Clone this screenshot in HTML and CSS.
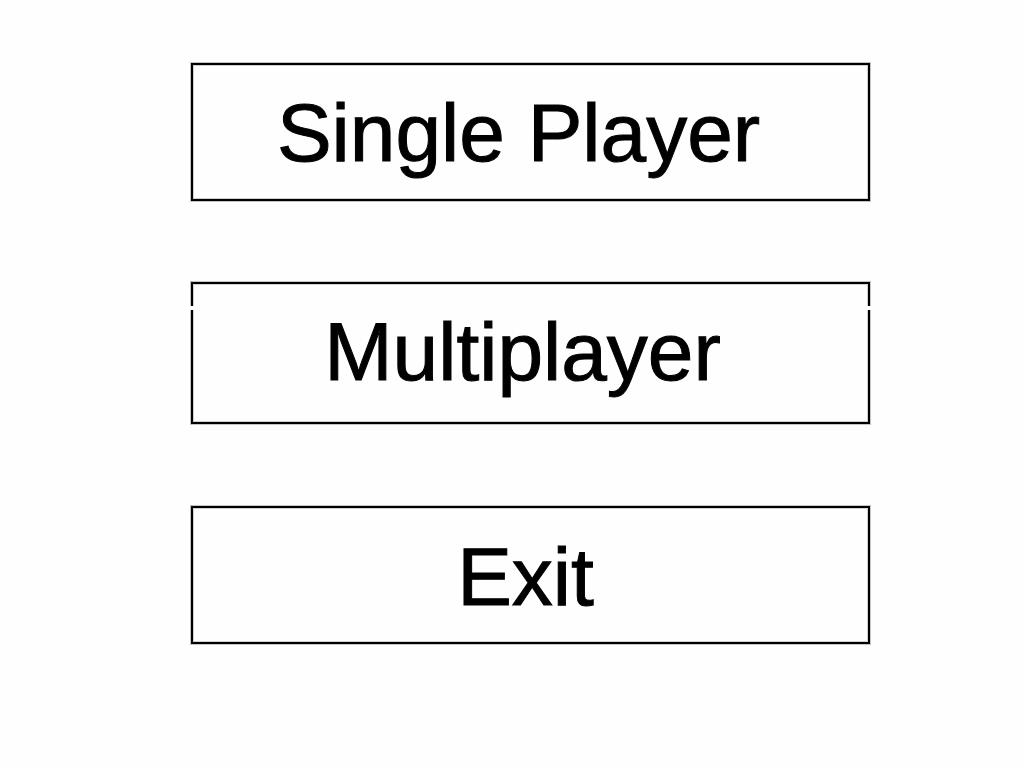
FILE: index.html
```html
<!DOCTYPE html>
<html lang="en">
<head>
  <meta charset="utf-8">
  <meta name="viewport" content="width=device-width, initial-scale=1">
  <title>Main Menu</title>
  <link rel="stylesheet" href="styles.css">
</head>
<body>
  <main class="menu">
    <button type="button" class="menu-item menu-item-single">Single Player</button>
    <button type="button" class="menu-item menu-item-multi">Multiplayer</button>
    <button type="button" class="menu-item menu-item-exit">Exit</button>
  </main>
</body>
</html>
```

FILE: styles.css
```css
* {
  box-sizing: border-box;
}

body {
  margin: 0;
  background: #fefefe;
  color: #000;
  font-family: "Liberation Sans", Arial, sans-serif;
}

.menu {
  display: flex;
  flex-direction: column;
  padding: 63px 154px 63px 191px;
}

.menu-item {
  position: relative;
  margin: 0;
  border: 2px solid #000;
  border-radius: 0;
  background: #fefefe;
  box-shadow: 0 0 0 1px #c4c4c4, inset 0 0 0 1px #d0d0d0;
  color: inherit;
  font-family: inherit;
  font-size: 82px;
  line-height: 94px;
  text-align: center;
  -webkit-text-stroke: 1px #000;
  cursor: pointer;
}

.menu-item-single {
  margin-bottom: 81px;
  padding: 21px 24px 19px 0;
}

.menu-item-multi {
  margin-bottom: 82px;
  padding: 21px 16px 23px 0;
}

/* Break in both side borders */
.menu-item-multi::after {
  content: "";
  position: absolute;
  top: 22px;
  left: -3px;
  right: -3px;
  height: 4px;
  background: #fefefe;
}

.menu-item-exit {
  padding: 22px 10px 18px 0;
}
```
